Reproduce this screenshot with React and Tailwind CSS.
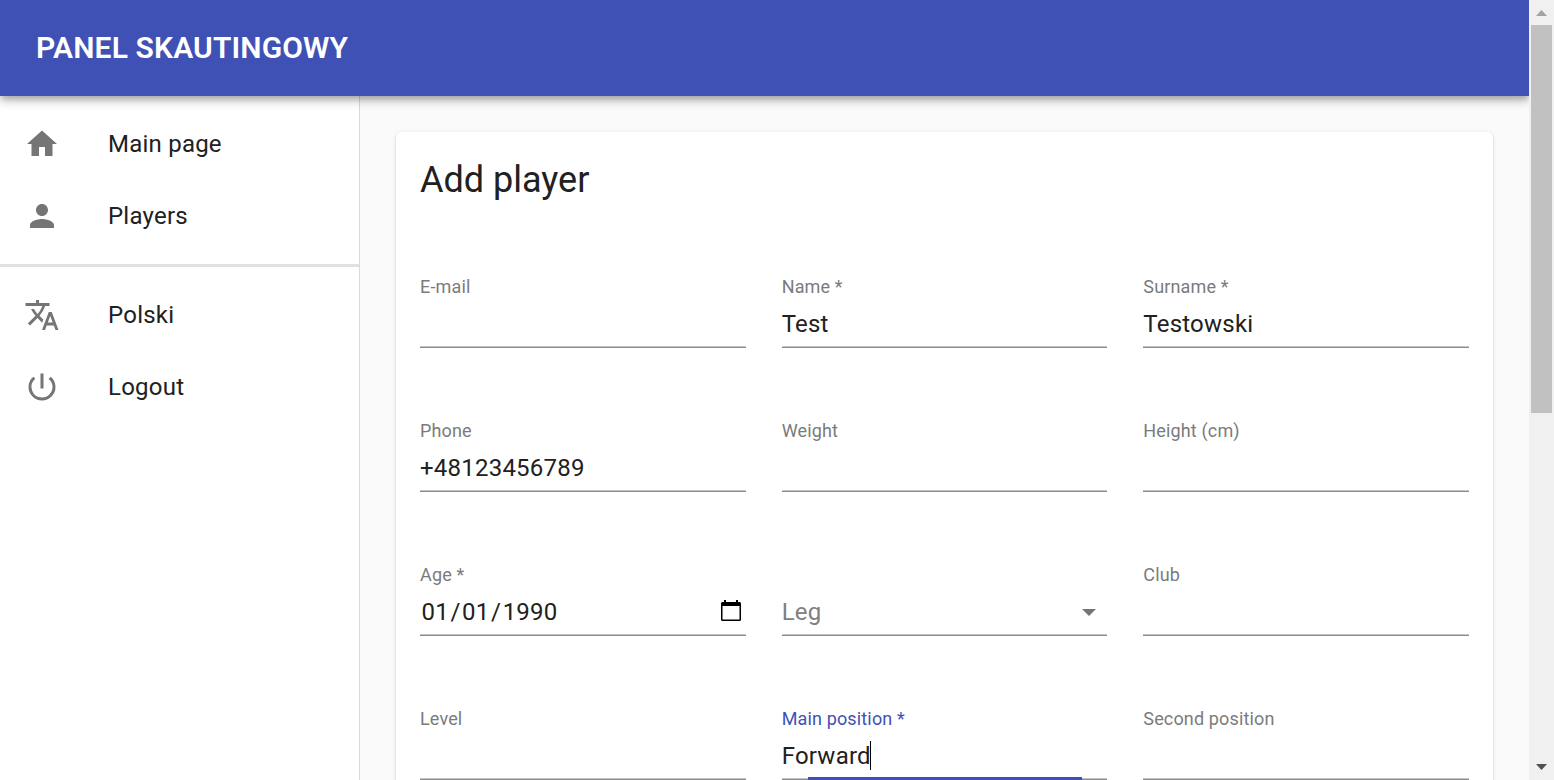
import { MdHome, MdPerson, MdTranslate, MdPowerSettingsNew } from "react-icons/md";

function NavItem({ icon: Icon, children }) {
  return (
    <li className="flex h-[72px] items-center pl-6">
      <Icon className="mr-12 size-9 text-[#757575]" />
      <span className="text-[24px] leading-9 tracking-[0.225px]">{children}</span>
    </li>
  );
}

function Field({ label, focused, children }) {
  return (
    <div className="relative flex h-[72px] flex-col">
      <div
        className={`mt-[2px] h-[18px] text-[18px] leading-[18px] tracking-[0.15px] ${
          focused ? "text-[#3f51b5]" : "text-[#7b7b7b]"
        }`}
      >
        {label}
      </div>
      <div className="mt-[14px] flex h-[29px] items-center text-[24px] leading-[29px] tracking-[0.225px] text-[#212121]">
        {children}
      </div>
      <div className="mt-auto h-[2px] shrink-0 border-b border-[#8c8c8c] bg-[#c4c4c4]" />
      {focused && <div className="absolute bottom-0 left-[26px] h-[3px] w-[274px] bg-[#3f51b5]" />}
    </div>
  );
}

function CalendarIcon() {
  return (
    <svg className="mb-[4px] ml-auto mr-[5px] h-[21px] w-[20px]" viewBox="0 0 20 21">
      <path
        d="M3 0h2v2h10V0h2v2h1.500A1.500 1.500 0 0 1 20 3.500v16a1.500 1.500 0 0 1-1.500 1.500h-17A1.500 1.500 0 0 1 0 19.500v-16A1.500 1.500 0 0 1 1.500 2H3zM1.500 6v13.500h17V6z"
        fill="#000"
        fillRule="evenodd"
      />
    </svg>
  );
}

function Scrollbar() {
  return (
    <div className="flex w-[25px] shrink-0 flex-col items-center bg-[#f0f0f0]">
      <div className="flex h-[25px] items-center justify-center">
        <svg className="mt-px h-[6px] w-[11px]" viewBox="0 0 11 6">
          <path d="M0 6 5.500 0 11 6z" fill="#a3a3a3" />
        </svg>
      </div>
      <div className="h-[388px] w-[21px] bg-[#c1c1c1]" />
      <div className="mt-auto flex h-[25px] items-center justify-center">
        <svg className="mb-px h-[6px] w-[11px]" viewBox="0 0 11 6">
          <path d="M0 0h11L5.500 6z" fill="#505050" />
        </svg>
      </div>
    </div>
  );
}

export default function App() {
  return (
    <div className="flex h-[780px] w-[1554px] overflow-hidden bg-[#fafafa] font-['Roboto',sans-serif] text-[#212121]">
      <div className="flex min-w-0 flex-1 flex-col overflow-hidden">
        <header className="relative z-10 flex h-24 shrink-0 items-center bg-[#3f51b5] px-9 shadow-[0_3px_6px_-1.5px_rgba(0,0,0,0.2),0_6px_7.5px_0_rgba(0,0,0,0.14),0_1.5px_15px_0_rgba(0,0,0,0.12)]">
          <h1 className="text-[30px] font-semibold leading-[48px] tracking-[0.14px] text-white">PANEL SKAUTINGOWY</h1>
        </header>
        <div className="flex min-h-0 flex-1">
          <nav className="w-[360px] shrink-0 border-r border-[#dadada] bg-white">
            <ul className="py-3">
              <NavItem icon={MdHome}>Main page</NavItem>
              <NavItem icon={MdPerson}>Players</NavItem>
            </ul>
            <div className="h-[3px] bg-[#e0e0e0]" />
            <ul className="py-3">
              <NavItem icon={MdTranslate}>Polski</NavItem>
              <NavItem icon={MdPowerSettingsNew}>Logout</NavItem>
            </ul>
          </nav>
          <main className="min-w-0 flex-1 px-9 pt-9">
            <section className="h-[900px] rounded-[6px] bg-white p-6 shadow-[0_3px_1.5px_-1.5px_rgba(0,0,0,0.2),0_1.5px_1.5px_0_rgba(0,0,0,0.14),0_1.5px_4.5px_0_rgba(0,0,0,0.12)]">
              <h2 className="text-[36px] leading-[48px]">Add player</h2>
              <div className="mt-[72px] grid grid-cols-3 gap-x-9 gap-y-[72px]">
                <Field label="E-mail" />
                <Field label="Name *">Test</Field>
                <Field label="Surname *">Testowski</Field>
                <Field label="Phone">+48123456789</Field>
                <Field label="Weight" />
                <Field label="Height (cm)" />
                <Field label="Age *">
                  <span className="flex gap-[1.500px] pl-[1.500px]">
                    <span>01</span>
                    <span>/</span>
                    <span>01</span>
                    <span>/</span>
                    <span>1990</span>
                  </span>
                  <CalendarIcon />
                </Field>
                <Field>
                  <span className="text-[#808080]">Leg</span>
                  <svg className="ml-auto mr-[11px] h-[7px] w-[14px]" viewBox="0 0 14 7">
                    <path d="M0 0h14L7 7z" fill="#757575" />
                  </svg>
                </Field>
                <Field label="Club" />
                <Field label="Level" />
                <Field label="Main position *" focused>
                  Forward
                  <span className="-ml-px mb-[2px] h-[29px] w-px bg-black" />
                </Field>
                <Field label="Second position" />
              </div>
            </section>
          </main>
        </div>
      </div>
      <Scrollbar />
    </div>
  );
}
